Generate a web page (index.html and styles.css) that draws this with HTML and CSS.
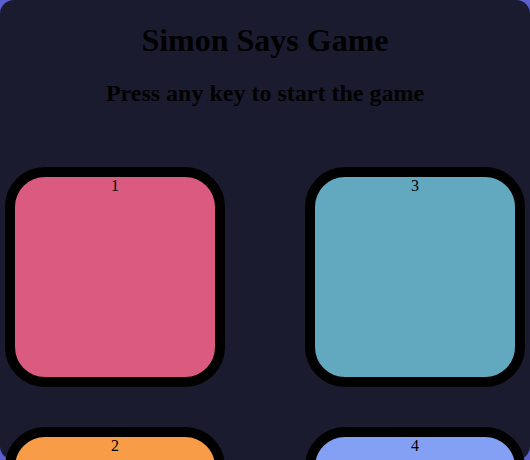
FILE: index.html
```html
<!DOCTYPE html>
<html>
<head>
<meta charset="utf-8">
<title>Simon Says Game</title>
<link rel="stylesheet" href="styles.css">
</head>
<body>
<div class="game">
  <h1 class="title">Simon Says Game</h1>
  <h2 class="status">Press any key to start the game</h2>
  <div class="board">
    <div class="pad pad-red">1</div>
    <div class="pad pad-teal">3</div>
    <div class="pad pad-orange">2</div>
    <div class="pad pad-blue">4</div>
  </div>
</div>
</body>
</html>
```
FILE: styles.css
```css
html {
  background: #5b5fcf;
}
body {
  margin: 0;
  font-family: "Liberation Serif", "Times New Roman", serif;
  color: #000;
}
.game {
  height: 100vh;
  background: #1b1b2f;
  border-radius: 14px;
  text-align: center;
}
.title {
  margin: 0 0 0.67em;
  padding-top: 22px;
  font-size: 32px;
  font-weight: bold;
}
.status {
  margin: 0.83em 0 19.92px;
  font-size: 24px;
  font-weight: bold;
}
.board {
  display: flex;
  flex-wrap: wrap;
  justify-content: space-between;
  row-gap: 40px;
  padding: 40px 5px 0;
}
.pad {
  width: 200px;
  height: 200px;
  border: 10px solid #000;
  border-radius: 40px;
  font-size: 16px;
  line-height: normal;
}
.pad-red { background: #db5b80; }
.pad-teal { background: #62a9c0; }
.pad-orange { background: #f99c48; }
.pad-blue { background: #84a0f5; }
```
